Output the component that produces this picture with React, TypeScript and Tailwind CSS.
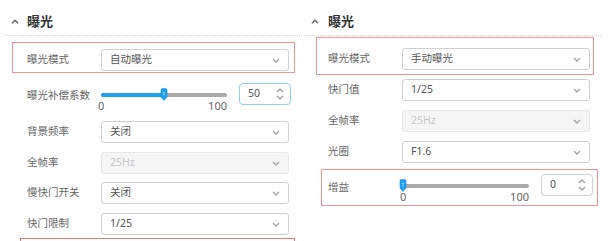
import React from "react";

const font = { fontFamily: '"Noto Sans", "Noto Sans CJK SC", sans-serif' };

function Chevron({ up = false }: { up?: boolean }) {
  return (
    <svg width="8" height="5" viewBox="0 0 8 5" className="block">
      <polyline
        points={up ? "1,4 4,1 7,4" : "1,1 4,4 7,1"}
        fill="none"
        stroke="#a0a0a0"
        strokeWidth="1.3"
      />
    </svg>
  );
}

function Header({ caretX, titleX }: { caretX: string; titleX: string }) {
  return (
    <div className="h-[36px] border-b border-dotted border-[#d6d6d6] flex items-end pb-[5px]">
      <div className={`flex items-center ${caretX}`}>
        <svg width="8" height="5" viewBox="0 0 8 5">
          <polyline points="1,4.2 4,1.2 7,4.2" fill="none" stroke="#666" strokeWidth="1.5" />
        </svg>
        <span className={`${titleX} text-[13px] leading-[18px] font-bold text-[#333]`}>曝光</span>
      </div>
    </div>
  );
}

function Select({ value, disabled = false }: { value: string; disabled?: boolean }) {
  return (
    <div
      className={`w-[188px] h-[22px] rounded-[3px] border flex items-center justify-between pl-[8px] pr-[8px] text-[10.5px] ${
        disabled ? "bg-[#f5f5f5] border-[#e8e8e8] text-[#c8c8c8]" : "bg-white border-[#d0d0d0] text-[#555]"
      }`}
    >
      <span>{value}</span>
      <Chevron />
    </div>
  );
}

function Row({ label, value, disabled, className = "" }: { label: string; value: string; disabled?: boolean; className?: string }) {
  return (
    <div className={`flex items-center h-[22px] ${className}`}>
      <span className="w-[74px] text-[10.5px] text-[#666]">{label}</span>
      <Select value={value} disabled={disabled} />
    </div>
  );
}

function Slider({ percent }: { percent: number }) {
  return (
    <div className="w-[126px] pt-[10px]">
      <div className="relative h-[4px] bg-[#ababab] rounded-full">
        <div className="h-[4px] bg-[#1ea1f1] rounded-full" style={{ width: `${percent}%` }} />
        <svg
          width="8"
          height="13"
          viewBox="0 0 8 13"
          className="absolute top-[-5px]"
          style={{ left: `calc(${percent}% - 4px)` }}
        >
          <path d="M1 2 Q1 0.5 2.5 0.5 H5.5 Q7 0.5 7 2 V9 L4 12.5 L1 9 Z" fill="#1ea1f1" stroke="#1486d0" strokeWidth="0.6" />
          <rect x="3.4" y="4" width="1.2" height="1.2" fill="#cdeafc" />
          <rect x="3.4" y="6" width="1.2" height="1.2" fill="#cdeafc" />
        </svg>
      </div>
      <div className="flex justify-between mt-[3px] text-[11px] leading-[12px] text-[#666]">
        <span className="-ml-[3px]">0</span>
        <span>100</span>
      </div>
    </div>
  );
}

function NumberBox({ value, focused = false }: { value: string; focused?: boolean }) {
  return (
    <div
      className={`w-[52px] h-[22px] rounded-[4px] border bg-white flex items-center justify-between pl-[8px] pr-[6px] text-[10.5px] text-[#555] ${
        focused ? "border-[#8ed0f6]" : "border-[#d0d0d0]"
      }`}
    >
      <span>{value}</span>
      <div className="flex flex-col gap-[2px]">
        <Chevron up />
        <Chevron />
      </div>
    </div>
  );
}

export default function App() {
  return (
    <div className="w-[615px] h-[241px] bg-white overflow-hidden flex" style={font}>
      {/* left panel */}
      <div className="w-[305px] shrink-0 pl-[3px]">
        <div className="w-[299px]">
          <Header caretX="pl-[8px]" titleX="ml-[8px]" />
        </div>
        <div className="mt-[6px] ml-[9px] w-[283px] h-[31px] border border-[#f29494] pt-[6px] pl-[14px]">
          <Row label="曝光模式" value="自动曝光" />
        </div>
        <div className="mt-[10px] ml-[24px] h-[38px] flex items-start">
          <span className="w-[74px] pt-[4px] text-[10.5px] leading-[16px] text-[#666]">曝光补偿系数</span>
          <Slider percent={50} />
          <div className="ml-[12px]">
            <NumberBox value="50" focused />
          </div>
        </div>
        <div className="ml-[24px]">
          <Row label="背景频率" value="关闭" />
          <Row label="全帧率" value="25Hz" disabled className="mt-[9px]" />
          <Row label="慢快门开关" value="关闭" className="mt-[8px]" />
          <Row label="快门限制" value="1/25" className="mt-[9px]" />
        </div>
        <div className="mt-[3px] ml-[17px] w-[275px] h-[20px] border border-[#e97878]" />
      </div>

      {/* right panel */}
      <div className="w-[296px] shrink-0">
        <Header caretX="pl-[6px]" titleX="ml-[9px]" />
        <div className="mt-[1px] ml-[11px] w-[278px] h-[38px] border border-[#f29494] pt-[10px] pl-[11px]">
          <Row label="曝光模式" value="手动曝光" />
        </div>
        <div className="ml-[23px]">
          <Row label="快门值" value="1/25" className="mt-[4px]" />
          <Row label="全帧率" value="25Hz" disabled className="mt-[9px]" />
          <Row label="光圈" value="F1.6" className="mt-[9px]" />
        </div>
        <div className="mt-[6px] ml-[16px] w-[277px] h-[37px] border border-[#f29494] pt-[4px] pl-[6px] flex items-start">
          <span className="w-[75px] pt-[5px] text-[10.5px] leading-[16px] text-[#666]">增益</span>
          <Slider percent={0} />
          <div className="ml-[12px]">
            <NumberBox value="0" />
          </div>
        </div>
      </div>
    </div>
  );
}
